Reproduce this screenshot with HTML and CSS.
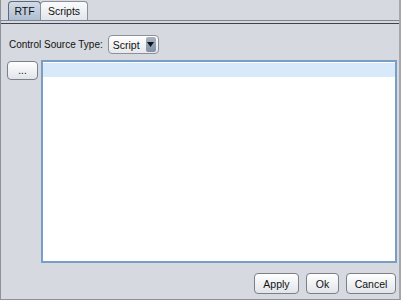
FILE: index.html
```html
<!DOCTYPE html>
<html lang="en">
<head>
    <meta charset="UTF-8">
    <title>Control Source</title>
    <link rel="stylesheet" href="styles.css">
</head>
<body>

<div class="window">
    <div class="tabbar">
        <div class="tab selected">RTF</div>
        <div class="tab">Scripts</div>
    </div>

    <div class="panel">
        <div class="type-row">
            <span class="label">Control Source Type:</span>
            <div class="combo">
                <span class="combo-value">Script</span>
                <span class="combo-arrow">
                    <svg width="7" height="5" viewBox="0 0 7 5"><path d="M0 0 L7 0 L3.5 5 Z" fill="#111"/></svg>
                </span>
            </div>
        </div>

        <div class="main">
            <button class="btn small">...</button>
            <div class="editor">
                <div class="line current"></div>
            </div>
        </div>

        <div class="actions">
            <button class="btn apply">Apply</button>
            <button class="btn ok">Ok</button>
            <button class="btn cancel">Cancel</button>
        </div>
    </div>
</div>

</body>
</html>
```

FILE: styles.css
```css
* {
    margin: 0;
    padding: 0;
    box-sizing: border-box;
}

body {
    font-family: 'Liberation Sans', Arial, sans-serif;
    font-size: 10px;
    color: #111;
    background-color: #d6d9df;
}

.window {
    width: 401px;
    height: 300px;
    display: flex;
    flex-direction: column;
    border-left: 1px solid #8e9197;
    border-right: 2px solid #a4a7ad;
    border-bottom: 1px solid #8e9197;
}

/* Tabs */
.tabbar {
    height: 21px;
    display: flex;
    align-items: flex-end;
    padding-left: 7px;
    border-bottom: 1px solid #7f8590;
}

.tab {
    height: 19px;
    padding: 0 7px;
    line-height: 19px;
    font-size: 10.5px;
    border: 1px solid #8a8f99;
    border-bottom: none;
    border-radius: 4px 4px 0 0;
    background: linear-gradient(#fbfbfc, #e2e5ea);
    margin-right: -1px;
}

.tab.selected {
    width: 33px;
    text-align: center;
    padding: 0;
    border-color: #5f6a79;
    background: linear-gradient(#d2dbe7, #aebed2);
}

.panel {
    flex: 1;
    margin-top: 2px;
    border-top: 1px solid #3c4450;
    padding: 11px 1px 0 6px;
    display: flex;
    flex-direction: column;
}

/* Type selector */
.type-row {
    display: flex;
    align-items: center;
    height: 19px;
    padding-left: 2px;
}

.label {
    font-size: 10px;
    margin-right: 5px;
}

.combo {
    width: 51px;
    height: 19px;
    display: flex;
    align-items: center;
    border: 1px solid #8b9099;
    border-radius: 4px;
    background: linear-gradient(#ffffff, #e6e8ec);
    padding: 1px 2px 1px 4px;
}

.combo-value {
    flex: 1;
    font-size: 10.5px;
}

.combo-arrow {
    width: 10px;
    height: 15px;
    display: flex;
    align-items: center;
    justify-content: center;
    border-radius: 2px;
    background: linear-gradient(#a6b3c4, #8192a7);
}

/* Editor row */
.main {
    display: flex;
    margin-top: 6px;
    gap: 3px;
}

.btn {
    font-family: 'Liberation Sans', Arial, sans-serif;
    font-size: 10.5px;
    color: #111;
    height: 21px;
    border: 1px solid #7c8089;
    border-radius: 4px;
    background: linear-gradient(#ffffff, #e1e4e9);
}

.btn.small {
    width: 31px;
    height: 19px;
    margin-top: 1px;
    font-size: 10px;
    line-height: 10px;
}

.editor {
    width: 356px;
    height: 203px;
    background-color: #fff;
    border: 2px solid #7a9dc6;
    padding-top: 1px;
}

.line.current {
    height: 14px;
    background-color: #d8eaf9;
}

/* Bottom buttons */
.actions {
    display: flex;
    justify-content: flex-end;
    gap: 7px;
    margin-top: 10px;
    padding-right: 2px;
}

.btn.apply { width: 45px; }
.btn.ok { width: 33px; }
.btn.cancel { width: 50px; }
```
